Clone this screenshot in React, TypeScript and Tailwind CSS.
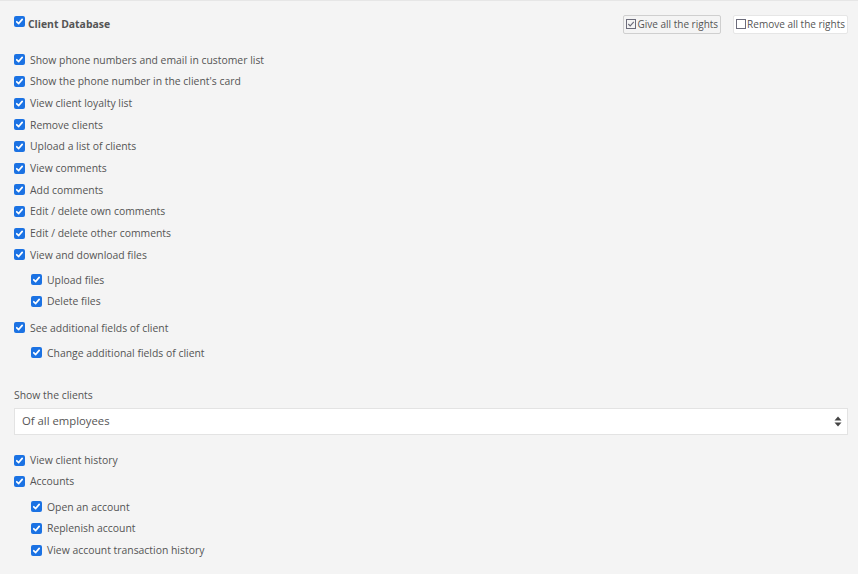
import React from "react";

type Item = { label: string; children?: string[] };

const topItems: Item[] = [
  { label: "Show phone numbers and email in customer list" },
  { label: "Show the phone number in the client's card" },
  { label: "View client loyalty list" },
  { label: "Remove clients" },
  { label: "Upload a list of clients" },
  { label: "View comments" },
  { label: "Add comments" },
  { label: "Edit / delete own comments" },
  { label: "Edit / delete other comments" },
  { label: "View and download files", children: ["Upload files", "Delete files"] },
  { label: "See additional fields of client", children: ["Change additional fields of client"] },
];

const bottomItems: Item[] = [
  { label: "View client history" },
  {
    label: "Accounts",
    children: ["Open an account", "Replenish account", "View account transaction history"],
  },
];

function Check() {
  return (
    <span className="flex h-[11px] w-[11px] shrink-0 items-center justify-center rounded-[2px] bg-[#1b72e3]">
      <svg width="9" height="9" viewBox="0 0 10 10">
        <path d="M2 5.3 L4.1 7.3 L8 2.6" fill="none" stroke="#fff" strokeWidth="1.9" strokeLinecap="round" strokeLinejoin="round" />
      </svg>
    </span>
  );
}

function Row({ label }: { label: string }) {
  return (
    <div className="flex h-[21.67px] items-center gap-[5px]">
      <Check />
      <span className="leading-none">{label}</span>
    </div>
  );
}

function ItemList({ items }: { items: Item[] }) {
  return (
    <div>
      {items.map((it, i) => (
        <div key={i}>
          <Row label={it.label} />
          {it.children && (
            <div className="pl-[17px] pt-[3.5px] pb-[4.5px]">
              {it.children.map((c) => (
                <Row key={c} label={c} />
              ))}
            </div>
          )}
        </div>
      ))}
    </div>
  );
}

export default function App() {
  return (
    <div
      className="min-h-screen w-full border-t border-[#e6e6e6] bg-[#f4f4f4] text-[10.4px] text-[#555]"
      style={{ fontFamily: "'Open Sans', 'Noto Sans', sans-serif" }}
    >
      <div className="mt-[13px] flex h-[20px] items-center justify-between pl-[14px] pr-[10px]">
        <div className="flex items-center gap-[3px]">
          <span className="-mt-[4px]">
            <Check />
          </span>
          <span className="mt-[2px] font-bold text-[10.4px]">Client Database</span>
        </div>
        <div className="flex items-center gap-[12px]">
          <button className="flex h-[19px] items-center gap-[1px] rounded-[2px] border border-[#cfcfcf] bg-[#f4f4f4] px-[2px] text-[10px] text-[#555]">
            <svg width="10" height="10" viewBox="0 0 10 10">
              <rect x="0.5" y="0.5" width="9" height="9" fill="none" stroke="#6b6b7a" />
              <path d="M2.3 5 L4.2 6.9 L7.8 2.8" fill="none" stroke="#6b6b7a" strokeWidth="1.1" />
            </svg>
            Give all the rights
          </button>
          <button className="flex h-[19px] items-center gap-[1px] rounded-[2px] border border-[#e6e6e6] bg-white px-[2px] text-[10px] text-[#555]">
            <svg width="10" height="10" viewBox="0 0 10 10">
              <rect x="0.5" y="0.5" width="9" height="9" fill="none" stroke="#6b6b7a" />
            </svg>
            Remove all the rights
          </button>
        </div>
      </div>

      <div className="pl-[14px] pr-[10px]">
        <div className="mt-[15px]">
          <ItemList items={topItems} />
        </div>

        <div className="mt-[19px] h-[16px] leading-[16px]">Show the clients</div>
        <div className="mt-[5px] flex h-[27px] items-center justify-between border border-[#e3e3e3] bg-white pl-[7px] pr-[5px] text-[11.3px]">
          <span>Of all employees</span>
          <svg width="8" height="11" viewBox="0 0 8 11">
            <path d="M4 0.5 L7.5 4.5 L0.5 4.5 Z" fill="#444" />
            <path d="M4 10.5 L7.5 6.5 L0.5 6.5 Z" fill="#444" />
          </svg>
        </div>

        <div className="mt-[14px]">
          <ItemList items={bottomItems} />
        </div>
      </div>
    </div>
  );
}
